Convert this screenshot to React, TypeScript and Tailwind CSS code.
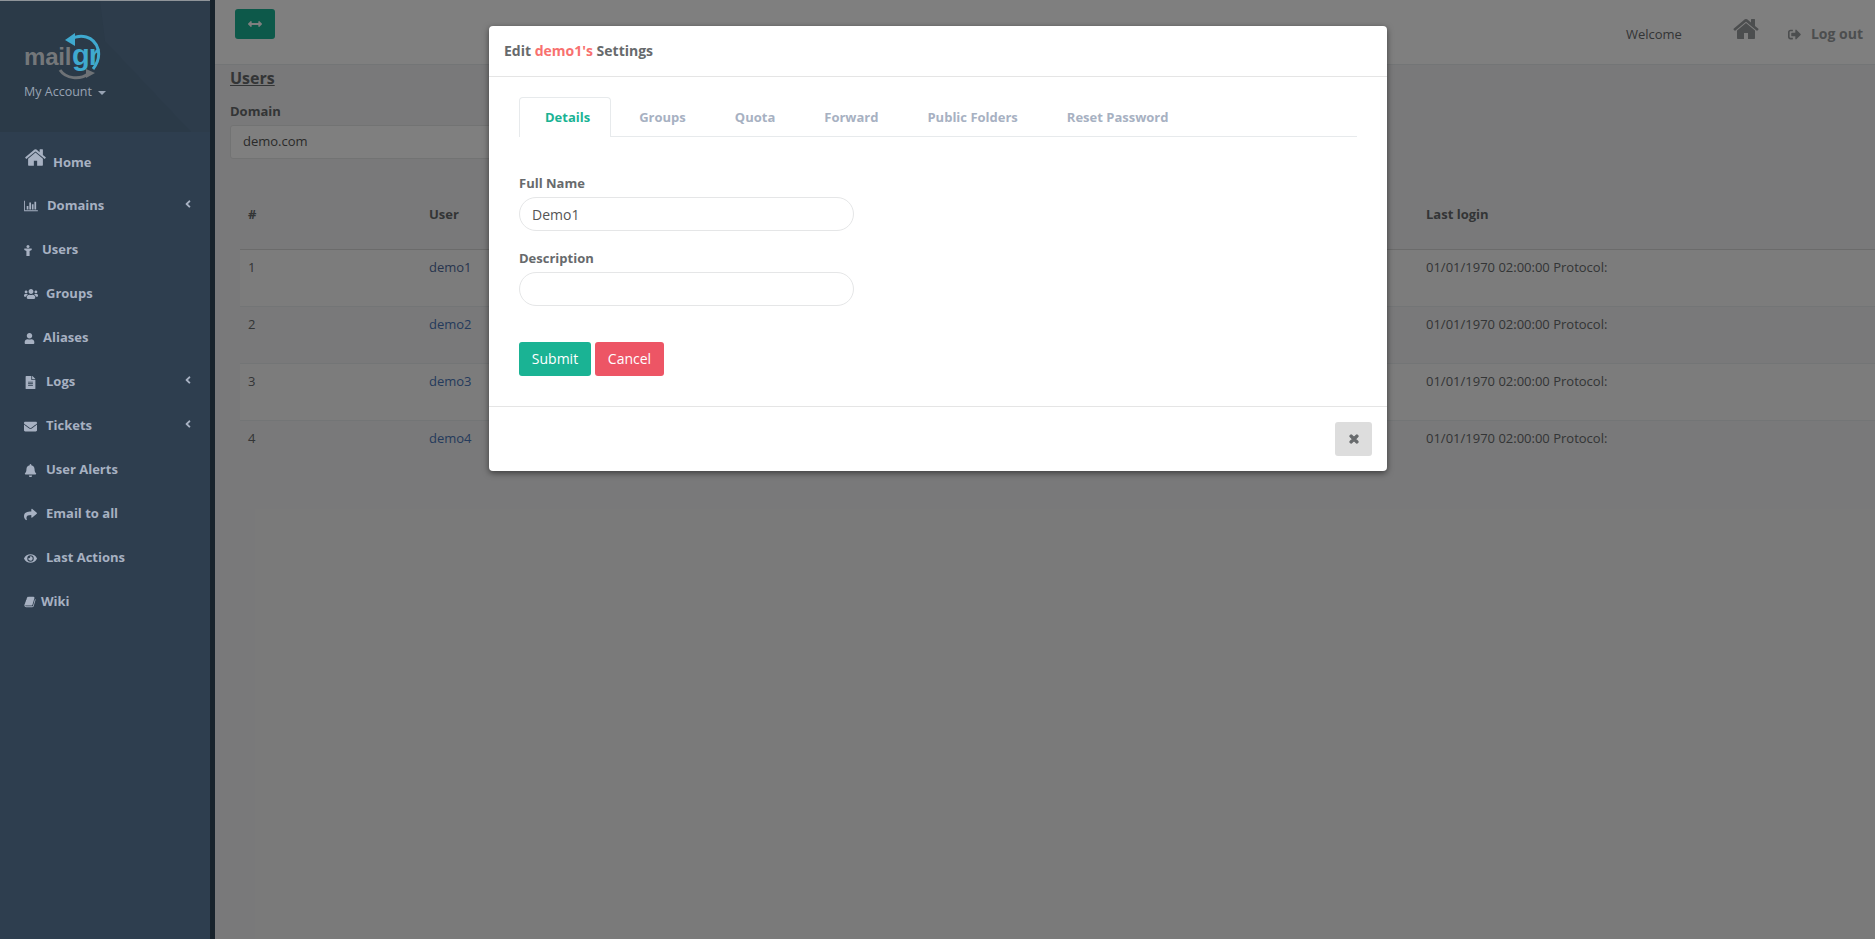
import { FaAngleLeft, FaArrowsAltH, FaBell, FaEnvelope, FaEye, FaFileAlt, FaShare, FaSignOutAlt, FaTimes, FaUser, FaUsers } from "react-icons/fa";
import type { ReactNode } from "react";

const HOME = "M1472 992v480q0 26-19 45t-45 19h-384v-384h-256v384h-384q-26 0-45-19t-19-45v-480q0-1 .5-3t.5-3l575-474 575 474q1 2 1 6zm223-69l-62 74q-8 9-21 11h-3q-13 0-21-7l-692-577-692 577q-12 8-24 7-13-2-21-11l-62-74q-8-10-7-23.5t11-21.5l719-599q32-26 76-26t76 26l244 204v-195q0-14 9-23t23-9h192q14 0 23 9t9 23v408l219 182q10 8 11 21.5t-7 23.5z";
const BARS = "M640 896v512h-256v-512h256zm384-512v1024h-256v-1024h256zm1024 1152v128h-2048v-1536h128v1408h1920zm-640-896v768h-256v-768h256zm384-384v1152h-256v-1152h256z";
const BOOK = "M1703 478q40 57 18 129l-275 906q-19 64-76.5 107.5t-122.5 43.5h-923q-77 0-148.5-53.5t-99.5-131.5q-24-67-2-127 0-4 3-27t4-37q1-8-3-21.5t-3-19.5q2-11 8-21t16.5-23.5 16.5-23.5q23-38 45-91.5t30-91.5q3-10 .5-30t-.5-28q3-11 17-28t17-23q21-36 42-92t25-90q1-9-2.5-32t.5-28q4-13 22-30.5t22-22.5q19-26 42.5-84.5t27.5-96.5q1-8-3-25.5t-2-26.5q2-8 9-18t18-23 17-21q8-12 16.5-30.5t15-35 16-36 19.5-32 26.5-23.5 36-11.5 47.5 5.5l-1 3q38-9 51-9h761q74 0 114 56t18 130l-274 906q-36 119-71.5 153.5t-128.5 34.5h-869q-27 0-38 15-11 16-1 43 24 70 144 70h923q29 0 56-15.5t35-41.5l300-987q7-22 5-57 38 15 59 43z";

function Logo() {
  return (
    <svg width="80" height="48" viewBox="0 0 80 48" className="block">
      <path d="M46 7 C56 0 70 3 74 16 C76 24 73 31 69 36" fill="none" stroke="#3fa9cf" strokeWidth="3" />
      <path d="M51 0 L51 13 L41 7 Z" fill="#3fa9cf" />
      <path d="M36 37 C42 46 56 47 64 41" fill="none" stroke="#6e7276" strokeWidth="3" />
      <path d="M62 36 L71 40 L62 45 Z" fill="#6e7276" />
      <text x="0" y="32" fontFamily="'Liberation Sans', sans-serif" fontWeight="700" fontSize="24" letterSpacing="-0.2" fill="#74777a">mail</text>
      <text x="48" y="32" fontFamily="'Liberation Sans', sans-serif" fontWeight="700" fontSize="29" letterSpacing="-1" fill="#3fa9cf">gr</text>
    </svg>
  );
}

function NavItem({ icon, label, gap, chevron, tall }: { icon: ReactNode; label: string; gap: string; chevron?: boolean; tall?: boolean }) {
  return (
    <a className={`flex items-center pl-6 pr-4 text-[13px] font-bold text-[#a7b1c2] ${tall ? "h-[52px] pt-[7px]" : "h-11"}`}>
      <span className={`flex items-center ${gap}`}>
        {icon}
        <span className={tall ? "mt-[2px]" : ""}>{label}</span>
      </span>
      {chevron && <FaAngleLeft className="ml-auto mb-[5px] text-[12px]" />}
    </a>
  );
}

function Sidebar() {
  return (
    <aside className="relative z-10 w-[215px] shrink-0 border-r-[5px] border-[#18232c] bg-[#2e3e4f]">
      <div className="relative h-[132px] overflow-hidden border-t border-[#8f9499] bg-[#2b3a48] pl-6 pt-[32px]">
        <svg className="absolute left-0 top-0" width="210" height="132" viewBox="0 0 210 132">
          <polygon points="100,0 210,0 210,132 192,132 105,40" fill="#2d3c4b" />
        </svg>
        <div className="relative">
          <Logo />
          <div className="mt-[2px] flex items-center text-[12.5px] text-[#98a3b3]">
            My Account
            <span className="ml-[6px] mt-[2px] h-0 w-0 border-x-4 border-t-4 border-x-transparent border-t-[#98a3b3]" />
          </div>
        </div>
      </div>
      <nav>
        <NavItem tall label="Home" gap="gap-[6px]" icon={<svg width="23" height="23" viewBox="0 0 1792 1792" fill="currentColor" className="-mt-[8px]"><path d={HOME} /></svg>} />
        <NavItem chevron label="Domains" gap="gap-[9px]" icon={<svg width="14" height="12" viewBox="0 0 2048 1792" fill="currentColor"><path d={BARS} /></svg>} />
        <NavItem label="Users" gap="gap-[10px]" icon={<svg width="8" height="11" viewBox="0 0 8 11" fill="currentColor"><circle cx="4" cy="1.5" r="1.5" /><path d="M0.3 3.5H7.7V5L5.6 6V11H2.4V6L0.3 5Z" /></svg>} />
        <NavItem label="Groups" gap="gap-[8px]" icon={<FaUsers className="text-[14px]" />} />
        <NavItem label="Aliases" gap="gap-[8px]" icon={<FaUser className="text-[11px]" />} />
        <NavItem chevron label="Logs" gap="gap-[9px]" icon={<FaFileAlt className="text-[13px]" />} />
        <NavItem chevron label="Tickets" gap="gap-[9px]" icon={<FaEnvelope className="text-[13px]" />} />
        <NavItem label="User Alerts" gap="gap-[9px]" icon={<FaBell className="text-[13px]" />} />
        <NavItem label="Email to all" gap="gap-[9px]" icon={<FaShare className="text-[13px]" />} />
        <NavItem label="Last Actions" gap="gap-[9px]" icon={<FaEye className="text-[13px]" />} />
        <NavItem label="Wiki" gap="gap-[5px]" icon={<svg width="12" height="12" viewBox="0 0 1792 1792" fill="currentColor"><path d={BOOK} /></svg>} />
      </nav>
    </aside>
  );
}

function Main() {
  const rows = ["demo1", "demo2", "demo3", "demo4"];
  return (
    <main className="relative flex min-w-0 flex-1 flex-col bg-[#f3f3f4] text-[13px] text-[#676a6c]">
      <header className="flex h-[65px] shrink-0 items-start border-b border-[#e7eaec] bg-white pl-5 pr-3">
        <button className="mt-[9px] flex h-[30px] w-10 items-center justify-center rounded-[3px] bg-[#1ab394] text-white">
          <FaArrowsAltH className="text-[14px]" />
        </button>
        <span className="ml-auto mt-[25px] leading-[18px]">Welcome</span>
        <svg width="28" height="28" viewBox="0 0 1792 1792" fill="currentColor" className="ml-[50px] mt-[15px] text-[#999c9e]"><path d={HOME} /></svg>
        <FaSignOutAlt className="ml-[28px] mt-[28px] text-[13px] text-[#999c9e]" />
        <span className="ml-[10px] mt-[24px] text-[14px] font-bold leading-[20px] text-[#999c9e]">Log out</span>
      </header>
      <div className="pl-[15px]">
        <h2 className="mt-[2px] text-[16px] font-bold leading-[22px] underline">Users</h2>
        <label className="mt-[13px] block font-bold leading-[18px]">Domain</label>
        <div className="mt-[5px] flex h-[34px] w-[600px] items-center rounded-[3px] border border-[#e5e6e7] bg-white pl-3 text-[13px] text-[#555]">demo.com</div>
        <table className="ml-[10px] mt-[35px] w-[1635px] table-fixed border-collapse text-left">
          <colgroup>
            <col className="w-[181px]" />
            <col className="w-[997px]" />
            <col />
          </colgroup>
          <thead>
            <tr className="h-[55px] border-b border-[#d6d6d6]">
              <th className="px-2 pb-[14px] font-bold">#</th>
              <th className="px-2 pb-[14px] font-bold">User</th>
              <th className="px-2 pb-[14px] font-bold">Last login</th>
            </tr>
          </thead>
          <tbody>
            {rows.map((name, i) => (
              <tr key={name} className={`h-[57px] align-top ${i < 3 ? "border-b border-[#e7eaec]" : ""} ${i % 2 === 0 ? "bg-[#f9f9f9]" : ""}`}>
                <td className="px-2 pt-2 leading-[18px]">{i + 1}</td>
                <td className={`px-2 pt-2 leading-[18px] ${i === 0 ? "text-[#506a9c]" : "text-[#4a76b8]"}`}>{name}</td>
                <td className="px-2 pt-2 leading-[18px]">01/01/1970 02:00:00 Protocol:</td>
              </tr>
            ))}
          </tbody>
        </table>
      </div>
      <div className="absolute inset-0 bg-black/50" />
    </main>
  );
}

function Modal() {
  const tabs = ["Groups", "Quota", "Forward", "Public Folders", "Reset Password"];
  return (
    <div className="absolute left-[489px] top-[26px] z-20 w-[898px] rounded-[4px] bg-white text-[13px] text-[#676a6c] shadow-[0_2px_6px_rgba(0,0,0,0.5)]">
      <div className="flex h-[51px] items-center border-b border-[#e5e5e5] pb-[2px] pl-[15px] text-[14px] font-bold">
        <span>Edit <span className="text-[#f8716f]">demo1's</span> Settings</span>
      </div>
      <div className="h-[330px] border-b border-[#e5e5e5] px-[30px] pt-[20px]">
        <div className="flex h-10 gap-[2px] border-b border-[#e7eaec] font-bold text-[#a7b1c2]">
          <div className="flex h-10 items-center rounded-t-[4px] border border-b-0 border-[#e7eaec] bg-white pl-[25px] pr-5 text-[#1ab394]">Details</div>
          {tabs.map((t) => (
            <div key={t} className="flex h-10 items-center border border-transparent pl-[25px] pr-5 pt-[1px]">{t}</div>
          ))}
        </div>
        <label className="mt-[37px] block font-bold leading-[18px]">Full Name</label>
        <div className="mt-[5px] flex h-[34px] w-[335px] items-center rounded-full border border-[#e5e6e7] pl-3 text-[14px] text-[#555]">Demo1</div>
        <label className="mt-[18px] block font-bold leading-[18px]">Description</label>
        <div className="mt-[5px] h-[34px] w-[335px] rounded-full border border-[#e5e6e7]" />
        <div className="mt-[36px] flex gap-[4px] text-[14px] text-white">
          <button className="h-[34px] w-[72px] rounded-[3px] bg-[#1ab394] pb-[2px]">Submit</button>
          <button className="h-[34px] w-[69px] rounded-[3px] bg-[#ed5565] pb-[2px]">Cancel</button>
        </div>
      </div>
      <div className="flex h-[64px] justify-end pr-[15px] pt-[15px]">
        <button className="flex h-[34px] w-[37px] items-center justify-center rounded-[3px] bg-[#dddddd] text-[#676a6c]">
          <FaTimes className="text-[12px]" stroke="currentColor" strokeWidth={50} />
        </button>
      </div>
    </div>
  );
}

export default function App() {
  return (
    <div className="relative flex h-[939px] overflow-hidden font-['Open_Sans',sans-serif]">
      <Sidebar />
      <Main />
      <Modal />
    </div>
  );
}
